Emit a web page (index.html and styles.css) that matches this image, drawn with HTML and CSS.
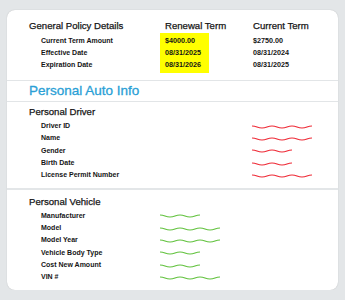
FILE: index.html
```html
<!DOCTYPE html>
<html lang="en">
<head>
<meta charset="utf-8">
<title>Policy</title>
<link rel="stylesheet" href="styles.css">
</head>
<body>
<div class="card">
  <section class="policy">
    <div class="grid">
      <div class="h">General Policy Details</div>
      <div class="h renew-h">Renewal Term</div>
      <div class="h">Current Term</div>
      <div class="labels">
        <div>Current Term Amount</div>
        <div>Effective Date</div>
        <div>Expiration Date</div>
      </div>
      <div class="renew">
        <div>$4000.00</div>
        <div>08/31/2025</div>
        <div>08/31/2026</div>
      </div>
      <div class="current">
        <div>$2750.00</div>
        <div>08/31/2024</div>
        <div>08/31/2025</div>
      </div>
    </div>
  </section>
  <section class="title">Personal Auto Info</section>
  <section class="group driver">
    <div class="h">Personal Driver</div>
    <div class="rows">
      <span>Driver ID</span><span class="val"><svg class="wave red long"><path d="M0 1C5 1 5 3 10 3S15 1 20 1S25 3 30 3S35 1 40 1S45 3 50 3S55 1 60 1"/></svg></span>
      <span>Name</span><span class="val"><svg class="wave red long"><path d="M0 1C5 1 5 3 10 3S15 1 20 1S25 3 30 3S35 1 40 1S45 3 50 3S55 1 60 1"/></svg></span>
      <span>Gender</span><span class="val"><svg class="wave red short"><path d="M0 1C5 1 5 3 10 3S15 1 20 1S25 3 30 3S35 1 40 1S45 3 50 3S55 1 60 1"/></svg></span>
      <span>Birth Date</span><span class="val"><svg class="wave red short"><path d="M0 1C5 1 5 3 10 3S15 1 20 1S25 3 30 3S35 1 40 1S45 3 50 3S55 1 60 1"/></svg></span>
      <span>License Permit Number</span><span class="val"><svg class="wave red long"><path d="M0 1C5 1 5 3 10 3S15 1 20 1S25 3 30 3S35 1 40 1S45 3 50 3S55 1 60 1"/></svg></span>
    </div>
  </section>
  <section class="group vehicle">
    <div class="h">Personal Vehicle</div>
    <div class="rows">
      <span>Manufacturer</span><span class="val"><svg class="wave green short"><path d="M0 1C5 1 5 3 10 3S15 1 20 1S25 3 30 3S35 1 40 1S45 3 50 3S55 1 60 1"/></svg></span>
      <span>Model</span><span class="val"><svg class="wave green long"><path d="M0 1C5 1 5 3 10 3S15 1 20 1S25 3 30 3S35 1 40 1S45 3 50 3S55 1 60 1"/></svg></span>
      <span>Model Year</span><span class="val"><svg class="wave green long"><path d="M0 1C5 1 5 3 10 3S15 1 20 1S25 3 30 3S35 1 40 1S45 3 50 3S55 1 60 1"/></svg></span>
      <span>Vehicle Body Type</span><span class="val"><svg class="wave green short"><path d="M0 1C5 1 5 3 10 3S15 1 20 1S25 3 30 3S35 1 40 1S45 3 50 3S55 1 60 1"/></svg></span>
      <span>Cost New Amount</span><span class="val"><svg class="wave green short"><path d="M0 1C5 1 5 3 10 3S15 1 20 1S25 3 30 3S35 1 40 1S45 3 50 3S55 1 60 1"/></svg></span>
      <span>VIN #</span><span class="val"><svg class="wave green long"><path d="M0 1C5 1 5 3 10 3S15 1 20 1S25 3 30 3S35 1 40 1S45 3 50 3S55 1 60 1"/></svg></span>
    </div>
  </section>
</div>
</body>
</html>
```

FILE: styles.css
```css
html, body {
  margin: 0;
  background: #e3e6e8;
  font-family: "Liberation Sans", Arial, sans-serif;
  color: #151515;
}

.card {
  margin: 10px 7px 0;
  width: 331px;
  background: #fff;
  border-radius: 8px;
  box-shadow: 0 0 1px rgba(0, 0, 0, 0.25);
  overflow: hidden;
}

.h {
  font-size: 9.6px;
  line-height: 12px;
  color: #151515;
  -webkit-text-stroke: 0.25px #151515;
}

.policy {
  padding: 10px 22px 6.5px;
  border-bottom: 1px solid #e2e5e7;
}

.grid {
  display: grid;
  grid-template-columns: 131px 93px auto;
  row-gap: 1.3px;
}

.renew-h {
  padding-left: 5px;
}

.labels,
.renew,
.current {
  padding: 1.5px 0;
  font-size: 7px;
  font-weight: bold;
  line-height: 12.3px;
}

.labels {
  padding-left: 12px;
}

.renew {
  background: #ffff00;
  width: 49px;
  padding: 1.5px 5px;
  box-sizing: border-box;
  font-size: 7.2px;
}

.current {
  font-size: 7.2px;
}

.title {
  height: 20px;
  line-height: 20px;
  padding: 0 22px;
  font-size: 13.5px;
  color: #2a9fd6;
  -webkit-text-stroke: 0.3px #2a9fd6;
  border-bottom: 1px solid #e2e5e7;
}

.group {
  padding: 4px 22px 6px;
}

.group .h {
  margin-bottom: 2.4px;
}

.vehicle {
  border-top: 2px solid #e3e6e8;
  padding: 6.4px 22px 6.2px;
}

.vehicle .h {
  margin-bottom: 1.9px;
}

.rows {
  display: grid;
  grid-template-columns: 211px auto;
  padding-left: 12px;
  font-size: 7px;
  font-weight: bold;
  line-height: 12.3px;
}

.vehicle .rows {
  grid-template-columns: 119px auto;
}

.val {
  display: flex;
  align-items: center;
  padding-top: 1px;
}

.wave {
  display: block;
  height: 4px;
  fill: none;
  stroke-width: 1.2;
  stroke-linecap: round;
}

.wave.long {
  width: 60px;
}

.wave.short {
  width: 40px;
}

.wave.red {
  stroke: #ee2a36;
}

.wave.green {
  stroke: #62c23e;
}
```
